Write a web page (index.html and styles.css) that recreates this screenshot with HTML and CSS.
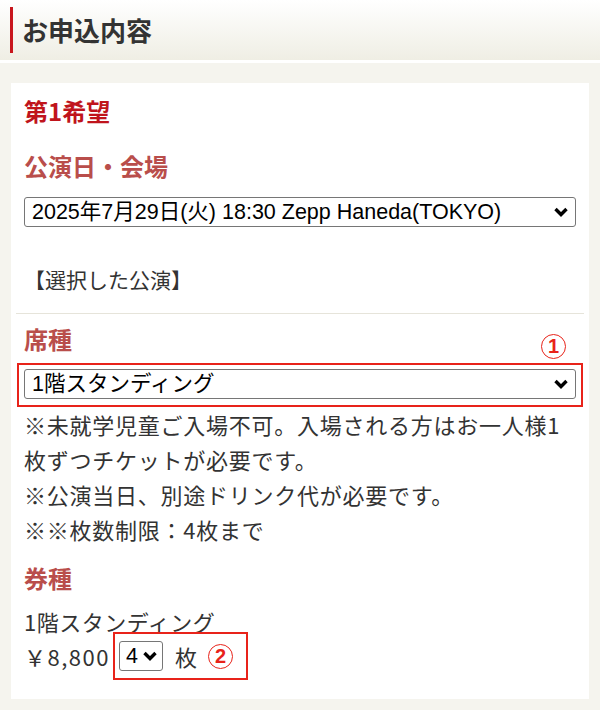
FILE: index.html
```html
<!DOCTYPE html>
<html lang="ja">
<head>
    <meta charset="UTF-8">
    <meta name="viewport" content="width=device-width, initial-scale=1.0">
    <title>お申込内容</title>
    <link rel="stylesheet" href="styles.css">
</head>
<body>
    <div class="page-head">
        <h1>お申込内容</h1>
    </div>

    <div class="entry-card">
        <div class="entry-section first">
            <h2 class="choice-title">第1希望</h2>
            <h3 class="field-title">公演日・会場</h3>
            <select class="field-select">
                <option>2025年7月29日(火) 18:30 Zepp Haneda(TOKYO)</option>
            </select>
            <p class="selected-note">【選択した公演】</p>
        </div>

        <div class="entry-section">
            <div class="field-head">
                <h3 class="field-title">席種</h3>
                <span class="mark">1</span>
            </div>
            <div class="mark-box wide">
                <select class="field-select">
                    <option>1階スタンディング</option>
                </select>
            </div>
            <div class="notes">
                <p>※未就学児童ご入場不可。入場される方はお一人様1枚ずつチケットが必要です。</p>
                <p>※公演当日、別途ドリンク代が必要です。</p>
                <p>※※枚数制限：4枚まで</p>
            </div>

            <h3 class="field-title ticket-title">券種</h3>
            <div class="ticket-name">1階スタンディング</div>
            <div class="price-row">
                <span class="price">￥8,800</span>
                <div class="mark-box qty">
                    <select class="qty-select">
                        <option>4</option>
                    </select>
                    <span class="unit">枚</span>
                    <span class="mark">2</span>
                </div>
            </div>
        </div>
    </div>
</body>
</html>
```

FILE: styles.css
```css
body {
    margin: 0;
    background-color: #f5f4ee;
    color: #333;
    font-family: "Noto Sans CJK JP", sans-serif;
}
.page-head {
    height: 63px;
    padding: 7px 0 0 10px;
    box-sizing: border-box;
    background: linear-gradient(#ffffff, #efeee4);
    border-bottom: 3px solid #fff;
}
.page-head h1 {
    margin: 0;
    height: 46px;
    border-left: 3px solid #c8161d;
    padding-left: 9px;
    font-size: 26px;
    line-height: 46px;
    color: #333;
}
.entry-card {
    background: #fff;
    margin: 20px 11px 0;
    padding: 5px;
}
.entry-section {
    padding: 10px 8px 14px;
}
.entry-section.first {
    padding: 8px 8px 17px;
    border-bottom: 1px solid #e6e4da;
}
.choice-title {
    margin: 0;
    font-size: 24px;
    line-height: 30px;
    color: #c0141c;
}
.field-title {
    margin: 25px 0 16px;
    font-size: 24px;
    line-height: 30px;
    color: #b94e4b;
}
.field-select,
.qty-select {
    appearance: none;
    height: 30px;
    border: 1px solid #767676;
    border-radius: 3px;
    background: #fff url("data:image/svg+xml,%3Csvg xmlns='http://www.w3.org/2000/svg' width='16' height='12' viewBox='0 0 16 12'%3E%3Cpath d='M2.5 3l5.5 5.5 5.5-5.5' fill='none' stroke='%23000' stroke-width='3.4'/%3E%3C/svg%3E") no-repeat right 6px center;
    font-family: "Liberation Sans", "Noto Sans CJK JP", sans-serif;
    font-size: 21.5px;
    color: #000;
    padding: 0 0 0 7px;
}
.field-select {
    display: block;
    width: 100%;
}
.selected-note {
    margin: 35px 0 0;
    font-size: 21px;
    line-height: 34px;
}
.field-head {
    display: flex;
    justify-content: space-between;
    align-items: flex-end;
    margin-bottom: 9px;
}
.field-head .field-title {
    margin: 0;
}
.field-head .mark {
    margin: 0 10px -5px 0;
}
.mark {
    display: inline-flex;
    align-items: center;
    justify-content: center;
    width: 23px;
    height: 23px;
    border: 1.5px solid #e8231a;
    border-radius: 50%;
    color: #e8231a;
    font-family: "Liberation Sans", sans-serif;
    font-weight: bold;
    font-size: 20px;
}
.mark-box {
    border: 2px solid #e8231a;
}
.mark-box.wide {
    margin: 0 -7px;
    padding: 4px 5px 6px;
}
.notes {
    font-size: 22px;
    letter-spacing: 0.75px;
    line-height: 35px;
}
.notes p {
    margin: 0;
}
.ticket-title {
    margin: 16px 0 14px;
}
.ticket-name {
    font-size: 22px;
    letter-spacing: 0.5px;
    line-height: 28px;
}
.price-row {
    display: flex;
    align-items: center;
    margin-top: -3px;
    font-size: 22px;
}
.price {
    letter-spacing: 1.5px;
    margin-right: 3px;
}
.mark-box.qty {
    display: flex;
    align-items: center;
    padding: 6px 13px 6px 4px;
}
.qty-select {
    width: 44px;
    padding-left: 6px;
    background-position: right 4px center;
}
.unit {
    margin: 0 11px 0 12px;
}
```
